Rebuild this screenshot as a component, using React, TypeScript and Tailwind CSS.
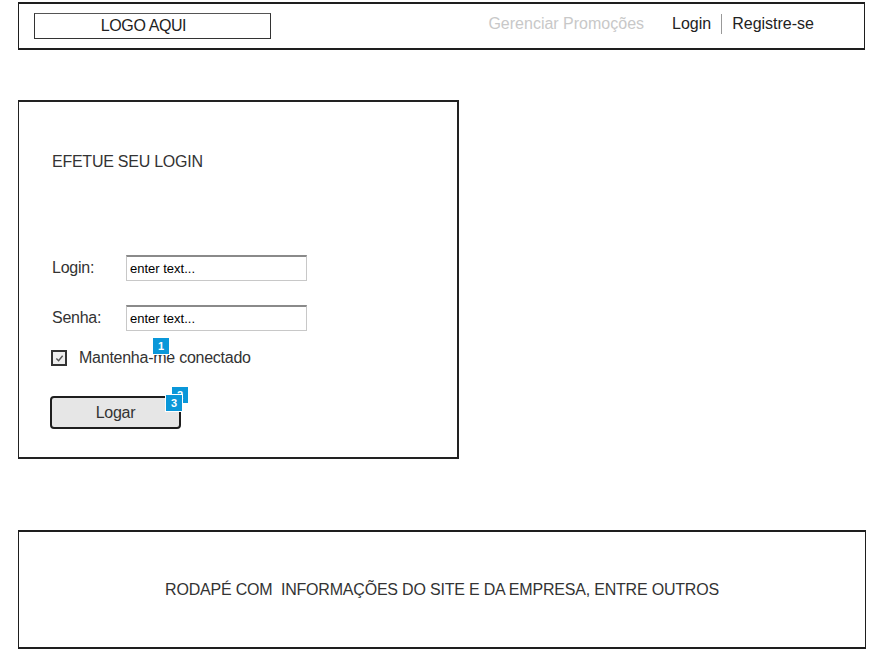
import React from "react";

const Badge: React.FC<{ n: string; className?: string }> = ({ n, className = "" }) => (
  <span
    className={`absolute flex h-[18px] w-[18px] items-center justify-center border border-white bg-[#0a97d9] text-[11px] font-bold leading-none text-white ${className}`}
  >
    {n}
  </span>
);

const TextInput: React.FC = () => (
  <div className="flex h-[26px] w-[181px] items-center border border-[#c8c8c8] border-t-[#8a8a8a] border-t-2 bg-white pl-[3px] text-[13px] tracking-normal text-black">
    enter text...
  </div>
);

export default function App() {
  return (
    <div className="flex min-h-[659px] w-[877px] flex-col bg-white pt-[2px] font-['Liberation_Sans',Arial,sans-serif] text-[16px] text-[#333]">
      {/* header */}
      <header className="ml-[18px] flex h-[48px] w-[847px] items-center border-2 border-[#1e1e1e] border-l-[1px] border-r-[1px] pl-[15px] pr-[50px]">
        <div className="flex h-[26px] w-[237px] items-center justify-center border border-[#333] border-t-[#555] pr-[18px] tracking-[-0.4px] text-[#222]">
          LOGO AQUI
        </div>
        <nav className="ml-auto flex -translate-y-[2px] items-center">
          <span className="mr-[28px] text-[#c8c8c8]">Gerenciar Promoções</span>
          <span className="text-[#222]">Login</span>
          <span className="mx-[10px] h-[20px] w-[1px] bg-[#999]" />
          <span className="text-[#222]">Registre-se</span>
        </nav>
      </header>

      {/* login panel */}
      <section className="ml-[18px] mt-[50px] flex h-[359px] w-[441px] flex-col border-2 border-[#222] border-l-[1px] border-r-[2px] pl-[33px] tracking-[-0.25px]">
        <h1 className="mt-[48px] text-[#333]">EFETUE SEU LOGIN</h1>

        <div className="mt-[81px] flex items-center">
          <span className="w-[74px]">Login:</span>
          <TextInput />
        </div>
        <div className="mt-[24px] flex items-center">
          <span className="w-[74px]">Senha:</span>
          <TextInput />
        </div>

        <div className="relative mt-[15px] flex items-center">
          <span className="-ml-[1px] flex h-[16px] w-[16px] items-center justify-center border-2 border-[#333] bg-[#eee]">
            <svg viewBox="0 0 10 10" className="h-[9px] w-[9px]" fill="none" stroke="#555" strokeWidth="1.6">
              <path d="M1.5 5 L4 7.5 L8.5 2" />
            </svg>
          </span>
          <span className="ml-[12px] text-[#333]">Mantenha-me conectado</span>
          <Badge n="1" className="left-[100px] top-[-9px]" />
        </div>

        <div className="relative -ml-[2px] mt-[26px] w-[131px]">
          <button className="flex h-[33px] w-[131px] items-center justify-center rounded-[4px] border-2 border-[#1e1e1e] bg-[#e6e6e6] text-[#333]">
            Logar
          </button>
          <Badge n="2" className="left-[121px] top-[-10px]" />
          <Badge n="3" className="left-[115px] top-[-2px]" />
        </div>
      </section>

      {/* footer */}
      <footer className="ml-[18px] mt-[71px] flex h-[119px] w-[848px] items-center justify-center border-2 border-[#1e1e1e] border-l-[1px] border-r-[1px] tracking-[-0.2px] text-[#333]">
        RODAPÉ COM&nbsp; INFORMAÇÕES DO SITE E DA EMPRESA, ENTRE OUTROS
      </footer>
    </div>
  );
}
